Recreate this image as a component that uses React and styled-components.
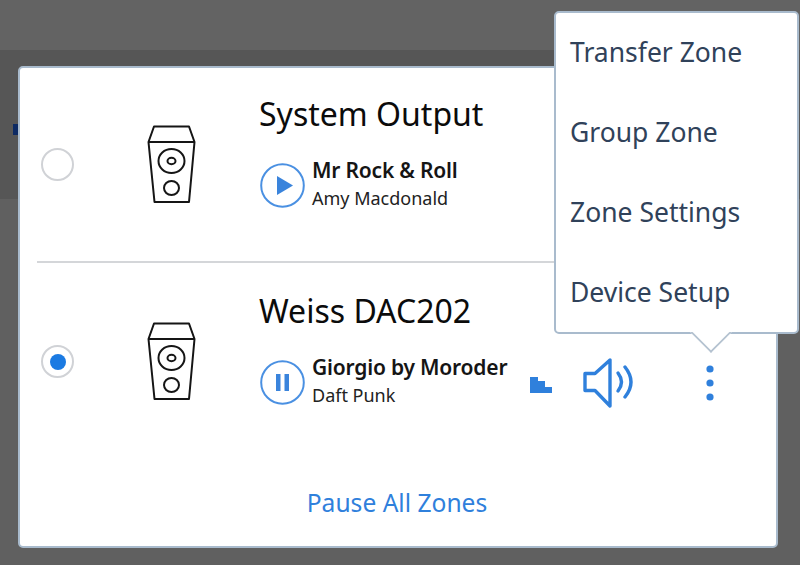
import React from 'react';
import styled, { createGlobalStyle } from 'styled-components';

const Global = createGlobalStyle`
  html, body { margin: 0; padding: 0; background: #606060; }
  * { box-sizing: border-box; }
  body { font-family: "Noto Sans", "Open Sans", sans-serif; }
`;

const Page = styled.div`
  position: relative;
  width: 800px;
  height: 565px;
  overflow: hidden;
  background: #606060;
`;
const TopBand = styled.div`
  height: 50px;
  background: #636363;
`;
const MidBand = styled.div`
  height: 149px;
  background: #565656;
`;
const Mark = styled.div`
  position: absolute;
  left: 13px;
  top: 124px;
  width: 6px;
  height: 11px;
  background: #0d2a63;
`;
const Modal = styled.div`
  position: absolute;
  left: 18px;
  top: 66px;
  width: 760px;
  height: 482px;
  background: #fff;
  border: 2px solid #a9bbcd;
  border-radius: 5px;
  padding: 0 0 0 17px;
  display: flex;
  flex-direction: column;
  gap: 2px;
`;
const Row = styled.div`
  flex: none;
  height: 195px;
  display: flex;
  align-items: flex-start;
  border-bottom: ${p => (p.$divided ? '2px solid #d4d6d9' : 'none')};
`;
const RadioCol = styled.div`
  width: 92px;
  padding: 80px 0 0 4px;
  flex: none;
`;
const Radio = styled.div`
  width: 33px;
  height: 33px;
  border-radius: 50%;
  border: 2px solid #d0d2d6;
  display: flex;
  align-items: center;
  justify-content: center;
  &::after {
    content: '';
    display: ${p => (p.$on ? 'block' : 'none')};
    width: 16px;
    height: 16px;
    border-radius: 50%;
    background: #1a7ae2;
  }
`;
const SpeakerCol = styled.div`
  width: 130px;
  padding: 57px 0 0 18px;
  flex: none;
  line-height: 0;
`;
const Info = styled.div`
  flex: 1;
  padding-top: 24px;
`;
const Name = styled.div`
  font-size: 32px;
  line-height: 44px;
  color: #0b0b0b;
`;
const Track = styled.div`
  display: flex;
  align-items: center;
  margin-top: 22px;
  margin-left: 1px;
  gap: 7px;
`;
const PlayButton = styled.div`
  width: 45px;
  height: 45px;
  line-height: 0;
  flex: none;
`;
const TrackText = styled.div`
  margin-top: -2px;
`;
const TrackTitle = styled.div`
  font-size: 21px;
  font-weight: 600;
  line-height: 28px;
  color: #151515;
  letter-spacing: -0.2px;
`;
const Artist = styled.div`
  font-size: 18px;
  line-height: 28px;
  color: #222;
`;
const Controls = styled.div`
  position: absolute;
  left: 530px;
  top: 358px;
  width: 190px;
  display: flex;
  align-items: center;
  line-height: 0;
`;
const Footer = styled.div`
  text-align: center;
  color: #2f80dc;
  font-size: 24.6px;
  line-height: 34px;
  margin-top: 24px;
  padding-right: 19px;
`;
const Menu = styled.div`
  position: absolute;
  left: 554px;
  top: 11px;
  width: 245px;
  height: 323px;
  background: #fff;
  border: 2px solid #a9bbcd;
  border-radius: 5px;
  padding: 1px 0 0 14px;
  &::after {
    content: '';
    position: absolute;
    left: 140px;
    bottom: -15px;
    width: 28px;
    height: 28px;
    background: #fff;
    border-right: 2px solid #b4c2d0;
    border-bottom: 2px solid #b4c2d0;
    transform: rotate(45deg);
    clip-path: polygon(100% 0, 100% 100%, 0 100%);
  }
`;
const MenuItem = styled.div`
  height: 80px;
  font-size: 26.5px;
  line-height: 76px;
  color: #30425a;
`;
const Spacer = styled.div`
  width: ${p => p.$w}px;
  flex: none;
`;
const MeterSlot = styled.div`
  margin-top: 4px;
`;

const Speaker = () => (
  <svg width="50" height="80" viewBox="0 0 50 80" fill="none" stroke="#151515" strokeWidth="2">
    <path d="M7 1.5 H42 L47.5 17 L42 77 H7.5 L1.5 17 Z" strokeLinejoin="round" />
    <path d="M1.5 17 H47.5" />
    <ellipse cx="24.5" cy="36" rx="13" ry="12" />
    <ellipse cx="24.5" cy="36" rx="4" ry="3.2" />
    <ellipse cx="24.5" cy="63" rx="7.5" ry="7" />
  </svg>
);

const Transport = ({ paused }) => (
  <svg width="45" height="45" viewBox="0 0 45 45">
    <circle cx="22.5" cy="22.5" r="21.3" fill="none" stroke="#4a90e2" strokeWidth="2" />
    {paused ? (
      <g fill="#3a84dc">
        <rect x="16" y="14" width="4.5" height="17" />
        <rect x="24.5" y="14" width="4.5" height="17" />
      </g>
    ) : (
      <path d="M17 13 L33 22.5 L17 32 Z" fill="#3a84dc" />
    )}
  </svg>
);

const Meter = () => (
  <svg width="22" height="16" viewBox="0 0 22 16" fill="#2f80dc">
    <path d="M0 0 H8 V4 H15 V10 H22 V16 H0 Z" />
  </svg>
);

const Volume = () => (
  <svg width="52" height="50" viewBox="0 0 52 50" fill="none" stroke="#2f80dc" strokeWidth="3.4" strokeLinecap="round" strokeLinejoin="round">
    <path d="M2 15.5 H12 L27 2 V48 L12 32.5 H2 Z" />
    <path d="M35 15 Q42 24 35 33" />
    <path d="M42 9 Q54 24 42 39" />
  </svg>
);

const Dots = () => (
  <svg width="10" height="38" viewBox="0 0 10 38" fill="#2f80dc">
    <circle cx="5" cy="5" r="3.6" />
    <circle cx="5" cy="19" r="3.6" />
    <circle cx="5" cy="33" r="3.6" />
  </svg>
);

const zones = [
  { name: 'System Output', title: 'Mr Rock & Roll', artist: 'Amy Macdonald', active: false },
  { name: 'Weiss DAC202', title: 'Giorgio by Moroder', artist: 'Daft Punk', active: true },
];

export default function App() {
  return (
    <Page>
      <Global />
      <TopBand />
      <MidBand />
      <Mark />
      <Modal>
        {zones.map((z, i) => (
          <Row key={z.name} $divided={i === 0}>
            <RadioCol>
              <Radio $on={z.active} />
            </RadioCol>
            <SpeakerCol>
              <Speaker />
            </SpeakerCol>
            <Info>
              <Name>{z.name}</Name>
              <Track>
                <PlayButton>
                  <Transport paused={z.active} />
                </PlayButton>
                <TrackText>
                  <TrackTitle>{z.title}</TrackTitle>
                  <Artist>{z.artist}</Artist>
                </TrackText>
              </Track>
            </Info>
          </Row>
        ))}
        <Footer>Pause All Zones</Footer>
      </Modal>
      <Controls>
        <MeterSlot>
          <Meter />
        </MeterSlot>
        <Spacer $w={31} />
        <Volume />
        <Spacer $w={70} />
        <Dots />
      </Controls>
      <Menu>
        <MenuItem>Transfer Zone</MenuItem>
        <MenuItem>Group Zone</MenuItem>
        <MenuItem>Zone Settings</MenuItem>
        <MenuItem>Device Setup</MenuItem>
      </Menu>
    </Page>
  );
}
